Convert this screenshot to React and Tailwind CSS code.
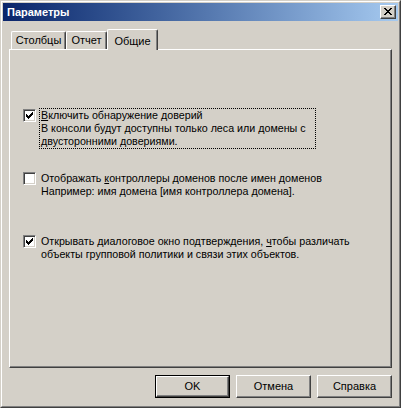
import React from 'react';

const font = { fontFamily: '"Liberation Sans", Arial, sans-serif' };

function Check() {
    // classic 7x7 check glyph
    return (
        <svg width="7" height="7" viewBox="0 0 7 7" shapeRendering="crispEdges">
            <path
                d="M0 2h1v3h-1z M1 3h1v3h-1z M2 4h1v3h-1z M3 3h1v3h-1z M4 2h1v3h-1z M5 1h1v3h-1z M6 0h1v3h-1z"
                fill="#000"
            />
        </svg>
    );
}

function CheckBox({ checked }) {
    return (
        <div className="w-[13px] h-[13px] shrink-0 border border-t-[#808080] border-l-[#808080] border-r-white border-b-white bg-white shadow-[inset_1px_1px_0_#404040,inset_-1px_-1px_0_#d4d0c8] pt-[2px] pl-[2px]">
            {checked && <Check />}
        </div>
    );
}

function Option({ checked, focused, className, children }) {
    return (
        <div className={"flex items-start ml-[13px] " + className}>
            <div className="mt-px">
                <CheckBox checked={checked} />
            </div>
            <div
                className={
                    "ml-[3px] border border-dotted whitespace-nowrap text-[10.7px] leading-[13px] pl-px " +
                    (focused ? "border-black w-[277px]" : "border-transparent")
                }
            >
                {children}
            </div>
        </div>
    );
}

function DlgButton({ label, isDefault }) {
    return (
        <div
            className={
                "w-[75px] h-[23px] " +
                (isDefault ? "border border-black" : "")
            }
        >
            <div className="w-full h-full border border-t-white border-l-white border-r-[#404040] border-b-[#404040] shadow-[inset_-1px_-1px_0_#808080] flex items-center justify-center text-[11px] font-normal text-black">
                {label}
            </div>
        </div>
    );
}

export default function App() {
    return (
        <div style={font} className="w-[401px] h-[408px] bg-[#d4d0c8] text-[11px] text-black border border-t-[#d4d0c8] border-l-[#d4d0c8] border-r-[#404040] border-b-[#404040]">
            <div className="w-full h-full border border-t-white border-l-white border-r-[#808080] border-b-[#808080] p-px flex flex-col">
                {/* caption */}
                <div className="h-[18px] bg-linear-to-r from-[#0a246a] to-[#a6caf0] flex items-center justify-between pl-[4px] pr-[2px]">
                    <span className="text-white font-bold text-[11px]">Параметры</span>
                    <div className="w-[16px] h-[14px] bg-[#d4d0c8] border border-t-white border-l-white border-r-[#404040] border-b-[#404040] shadow-[inset_-1px_-1px_0_#808080] pl-[3px] pt-[2px]">
                        <svg width="8" height="7" viewBox="0 0 8 7" shapeRendering="crispEdges">
                            <path
                                d="M0 0h2v1h-2z M6 0h2v1h-2z M1 1h2v1h-2z M5 1h2v1h-2z M2 2h4v1h-4z M3 3h2v1h-2z M2 4h4v1h-4z M1 5h2v1h-2z M5 5h2v1h-2z M0 6h2v1h-2z M6 6h2v1h-2z"
                                fill="#000"
                            />
                        </svg>
                    </div>
                </div>

                <div className="flex-1 flex flex-col px-[6px] pt-[8px]">
                    {/* tabs */}
                    <div className="flex items-end h-[20px] pl-[2px] relative z-10">
                        <div className="w-[55px] h-[18px] border-t border-l border-t-white border-l-white border-r border-r-[#404040] shadow-[inset_-1px_0_0_#808080] rounded-t-[2px] flex items-center justify-center">
                            Столбцы
                        </div>
                        <div className="w-[41px] h-[18px] border-t border-l border-t-white border-l-white border-r border-r-[#404040] shadow-[inset_-1px_0_0_#808080] rounded-t-[2px] flex items-center justify-center">
                            Отчет
                        </div>
                        <div className="w-[51px] h-[21px] -mb-px bg-[#d4d0c8] border-t border-l border-t-white border-l-white border-r border-r-[#404040] shadow-[inset_-1px_0_0_#808080] rounded-t-[2px] flex items-start justify-center pt-[3px]">
                            Общие
                        </div>
                    </div>

                    {/* panel */}
                    <div className="h-[319px] border border-t-white border-l-white border-r-[#404040] border-b-[#404040] shadow-[inset_-1px_-1px_0_#808080]">
                        <Option checked focused className="mt-[58px]">
                            <u>В</u>ключить обнаружение доверий
                            <br />
                            В консоли будут доступны только леса или домены с
                            <br />
                            двусторонними довериями.
                        </Option>
                        <Option className="mt-[22px]">
                            Отображать <u>к</u>онтроллеры доменов после имен доменов
                            <br />
                            Например: имя домена [имя контроллера домена].
                        </Option>
                        <Option checked className="mt-[35px]">
                            Открывать диалоговое окно подтверждения, <u>ч</u>тобы различать
                            <br />
                            объекты групповой политики и связи этих объектов.
                        </Option>
                    </div>

                    {/* buttons */}
                    <div className="flex justify-end gap-[6px] mt-[7px]">
                        <DlgButton label="OK" isDefault />
                        <DlgButton label="Отмена" />
                        <DlgButton label="Справка" />
                    </div>
                </div>
            </div>
        </div>
    );
}
